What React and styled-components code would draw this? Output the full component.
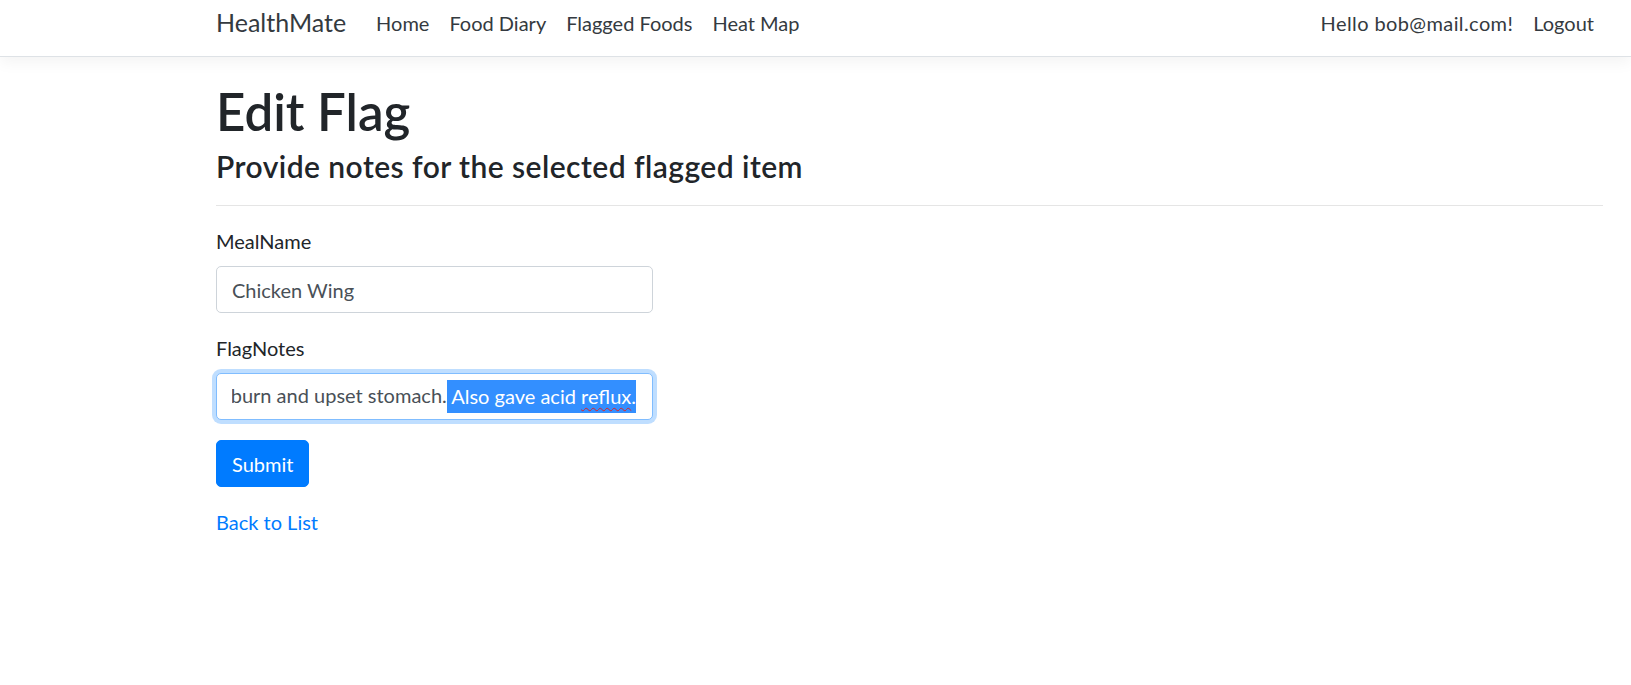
import React from "react"
import styled, { createGlobalStyle } from "styled-components"

const GlobalStyle = createGlobalStyle`
  * {
    box-sizing: border-box;
  }
  html, body {
    margin: 0;
    padding: 0;
    background: #fff;
  }
  body {
    font-family: Lato, "Noto Sans", sans-serif;
    font-size: 20px;
    line-height: 1.5;
    color: #212529;
  }
`

const Header = styled.header`
  background: #fff;
  border-bottom: 1px solid #dee2e6;
  box-shadow: 0 5px 15px rgba(0, 0, 0, 0.05);
`

const NavBar = styled.nav`
  display: flex;
  align-items: center;
  height: 56px;
  padding: 0 27px 10px 216px;
`

const Brand = styled.a`
  font-size: 25px;
  line-height: 1.5;
  color: #343a40;
  text-decoration: none;
  margin-right: 20px;
`

const NavGroup = styled.div`
  display: flex;
  align-items: center;
  flex: ${(p) => (p.$grow ? 1 : "none")};
`

const NavLink = styled.a`
  display: block;
  padding: 0 10px;
  line-height: 30px;
  color: #343a40;
  text-decoration: none;
  letter-spacing: ${(p) => (p.$wide ? "0.4px" : "normal")};
`

const Main = styled.main`
  padding: 24px 28px 0 216px;
`

const Title = styled.h1`
  margin: 0 0 6px;
  font-size: 51px;
  font-weight: 600;
  line-height: 1.2;
`

const SubTitle = styled.h4`
  margin: 0;
  font-size: 30px;
  font-weight: 600;
  line-height: 1.2;
  letter-spacing: 0.45px;
`

const Rule = styled.hr`
  margin: 21px 0 20px;
  border: 0;
  border-top: 1px solid rgba(0, 0, 0, 0.1);
`

const Form = styled.form`
  width: 437px;
`

const FormGroup = styled.div`
  margin-bottom: 20px;
`

const Label = styled.label`
  display: inline-block;
  margin-bottom: 10px;
`

const Field = styled.div`
  display: flex;
  align-items: center;
  height: 47px;
  padding: 0 15px;
  border: 1px solid ${(p) => (p.$focused ? "#80bdff" : "#ced4da")};
  border-radius: 5px;
  color: #495057;
  background: #fff;
  box-shadow: ${(p) => (p.$focused ? "0 0 0 4px rgba(0, 123, 255, 0.25)" : "none")};
`

const FieldText = styled.div`
  flex: 1;
  display: flex;
  justify-content: ${(p) => (p.$scrolled ? "flex-end" : "flex-start")};
  overflow: hidden;
  white-space: pre;
  padding-right: 1px;
`

const Selected = styled.span`
  background: #338fff;
  color: #fff;
  padding: 1px 0 2px;
`

const Misspelled = styled.span`
  text-decoration: underline wavy #e02020;
  text-decoration-skip-ink: none;
  text-underline-offset: 3px;
  text-decoration-thickness: 1px;
`

const Button = styled.button`
  display: inline-block;
  height: 47px;
  padding: 0 15px;
  font: inherit;
  color: #fff;
  background: #007bff;
  border: 1px solid #007bff;
  border-radius: 5px;
`

const BackLink = styled.a`
  color: #007bff;
  text-decoration: none;
`

const App = () => {
  return (
    <>
      <GlobalStyle />
      <Header>
        <NavBar>
          <Brand href="#">HealthMate</Brand>
          <NavGroup $grow>
            <NavLink href="#">Home</NavLink>
            <NavLink href="#">Food Diary</NavLink>
            <NavLink href="#">Flagged Foods</NavLink>
            <NavLink href="#">Heat Map</NavLink>
          </NavGroup>
          <NavGroup>
            <NavLink as="span" $wide>
              Hello bob@mail.com!
            </NavLink>
            <NavLink href="#">Logout</NavLink>
          </NavGroup>
        </NavBar>
      </Header>

      <Main>
        <Title>Edit Flag</Title>
        <SubTitle>Provide notes for the selected flagged item</SubTitle>
        <Rule />

        <Form onSubmit={(e) => e.preventDefault()}>
          <FormGroup>
            <Label>MealName</Label>
            <Field>
              <FieldText>Chicken Wing</FieldText>
            </Field>
          </FormGroup>
          <FormGroup>
            <Label>FlagNotes</Label>
            <Field $focused>
              <FieldText $scrolled>
                Gave me heartburn and upset stomach.
                <Selected>
                  {" Also gave acid "}
                  <Misspelled>reflux</Misspelled>.
                </Selected>
              </FieldText>
            </Field>
          </FormGroup>
          <FormGroup>
            <Button type="submit">Submit</Button>
          </FormGroup>
        </Form>

        <div>
          <BackLink href="#">Back to List</BackLink>
        </div>
      </Main>
    </>
  )
}

export default App
